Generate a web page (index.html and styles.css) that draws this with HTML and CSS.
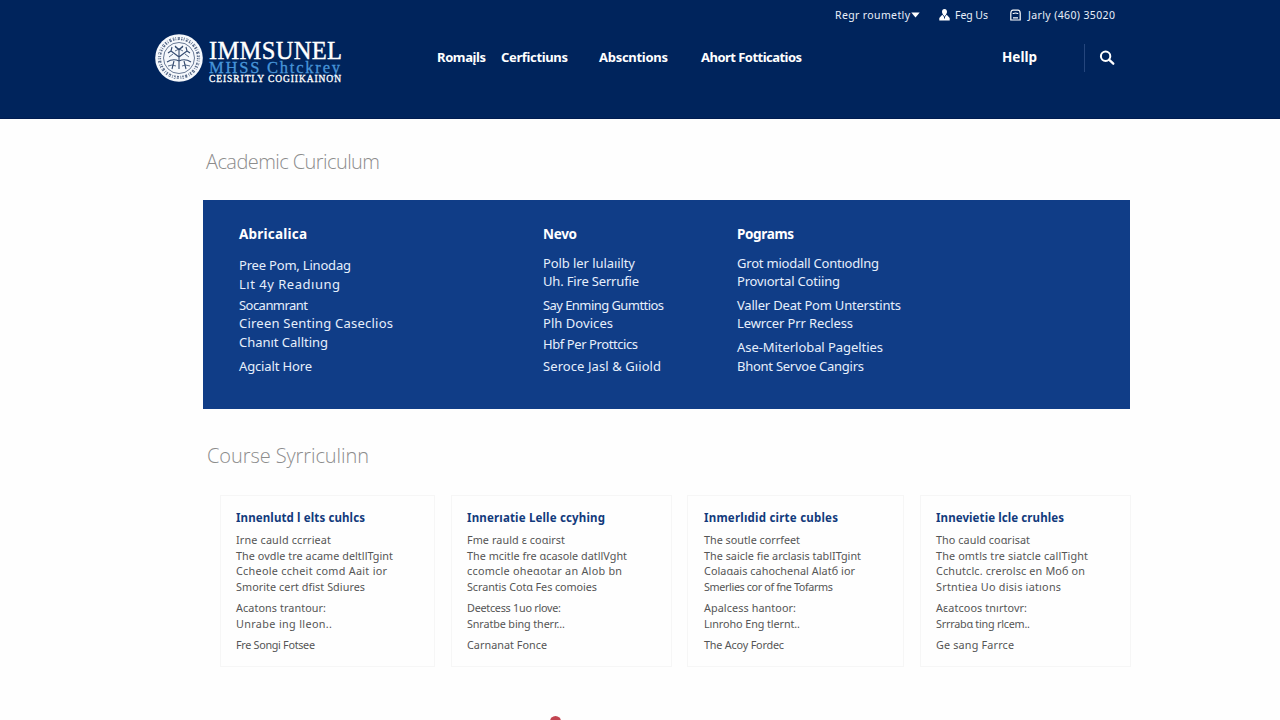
FILE: index.html
```html
<!DOCTYPE html>
<html lang="en">
<head>
<meta charset="utf-8">
<title>Academic Curiculum</title>
<link rel="stylesheet" href="styles.css">
</head>
<body>
<header class="header">
  <div class="utility">
    <a class="menu"><span data-w="75">Regr roumetly</span><svg width="9" height="6" viewBox="0 0 9 6"><path d="M.3.5h8.400L4.500 5.500z" fill="#fff"/></svg></a>
    <a class="user"><svg width="11" height="12" viewBox="0 0 11 12"><path fill="#fff" d="M5.500 0C3.800 0 3 1.200 3 2.700c0 1.200.5 2.200 1.200 2.700L2.500 6.500 .3 9v2.600h10.400V9L8.500 6.500 6.800 5.400C7.500 4.900 8 3.900 8 2.700 8 1.200 7.200 0 5.500 0z"/><path d="M3.800 6.200l1.700 1.500 1.700-1.500M5.500 7.700v1.800" stroke="#00245c" fill="none"/></svg><span data-w="33">Feg Us</span></a>
    <a class="phone"><svg width="11" height="12" viewBox="0 0 11 12"><path fill="none" stroke="#fff" stroke-width="1.200" d="M.8 11V4.200Q1 1.200 3 1.200h5q2 0 2.200 3V11zM3 5Q3 4 5.500 4T8 5M3 8.800h5"/></svg><span data-w="87">Jarly (460) 35020</span></a>
  </div>
  <div class="mainbar">
    <a class="brand">
      <svg class="seal" width="48" height="48" viewBox="0 0 48 48">
        <circle cx="24" cy="24" r="23.800" fill="#f5f8fc"/>
        <circle cx="24" cy="24" r="19.500" fill="none" stroke="#5b6d8b" stroke-width="3.200" stroke-dasharray="1.500 1.100 .8 1.500 2.200 1.400"/>
        <circle cx="24" cy="24" r="20" fill="none" stroke="#f5f8fc" stroke-width=".9" stroke-dasharray="3 2"/>
        <circle cx="24" cy="24" r="15.500" fill="#f5f8fc" stroke="#44587a" stroke-width=".8"/>
        <g fill="none" stroke="#344b70" stroke-width="1.100">
          <path d="M24 35V15M12 28q6-4 12-1q6-3 12 1M24 23l-8-6-3 2M24 23l8-6 3 2M16 17l1-4M32 17l-1-4M24 16l-4-4M24 16l4-4M17 35l2-8M31 35l-2-8"/>
          <path d="M13 32q4-2 8 0M27 32q3-2 8 0M18 20l-4 3M30 20l4 3M20 13l8 4M28 13l-8 4" stroke-width=".8"/>
        </g>
      </svg>
      <span class="wordmark">
        <span class="name" data-w="133">IMMSUNEL</span>
        <span class="sub" data-w="131">MHSS Chtckrey</span>
        <span class="tag" data-w="132">CEISRITLY COGIIKAINON</span>
      </span>
    </a>
    <nav class="nav">
      <a data-w="49">Romaįls</a><a data-w="67">Cerfictiuns</a><a data-w="69">Abscntions</a><a data-w="101">Ahort Fotticatios</a>
    </nav>
    <a class="help" data-w="35">Hellp</a>
    <span class="rule"></span>
    <svg class="search" width="16" height="16" viewBox="0 0 16 16"><circle cx="6.600" cy="6.300" r="4.700" fill="none" stroke="#fff" stroke-width="2"/><path d="M10 9.700l4.300 4" stroke="#fff" stroke-width="2.300" stroke-linecap="round"/></svg>
  </div>
</header>
<main class="main">
  <h1 class="heading" data-w="174">Academic Curiculum</h1>
  <section class="panel">
    <div class="col first">
      <h2 data-w="68">Abricalica</h2>
      <ul><li data-w="112">Pree Pom, Linodag</li><li data-w="101">Lıt 4y Readıung</li><li data-w="69">Socanmrant</li><li data-w="154">Cireen Senting Caseclios</li><li data-w="89">Chanıt Callting</li><li data-w="73">Agcialt Hore</li></ul>
    </div>
    <div class="col second">
      <h2 data-w="34">Nevo</h2>
      <ul><li data-w="92">Polb ler lulaıilty</li><li data-w="96">Uh. Fire Serrufie</li><li data-w="121">Say Enming Gumttios</li><li data-w="70">Plh Dovices</li><li data-w="95">Hbf Per Prottcics</li><li data-w="118">Seroce Jasl &amp; Gıiold</li></ul>
    </div>
    <div class="col third">
      <h2 data-w="57">Pograms</h2>
      <ul><li data-w="142">Grot miodall Contıodlng</li><li data-w="103">Provıortal Cotiing</li><li data-w="164">Valler Deat Pom Unterstints</li><li data-w="116">Lewrcer Prr Recless</li><li data-w="146">Ase-Miterlobal Pagelties</li><li data-w="127">Bhont Servoe Cangirs</li></ul>
    </div>
  </section>
  <h1 class="heading course" data-w="162">Course Syrriculinn</h1>
  <section class="cards">
    <article class="card">
      <h3 data-w="129">Innenlutd l elts cuhlcs</h3>
      <p data-w="95">Irne cauld ccrrieat</p><p data-w="157">The ovdle tre acame deltllTgint</p><p data-w="151">Ccheole ccheit comd Aait ior</p><p data-w="129">Smorite cert dfist Sdiures</p>
      <p class="gap" data-w="90">Acatons trantour:</p><p data-w="96">Unrabe ing lleon..</p><p class="gap" data-w="79">Fre Songi Fotsee</p>
    </article>
    <article class="card">
      <h3 data-w="138">Innerıatie Lelle ccyhing</h3>
      <p data-w="98">Fme rauld ɛ coɑirst</p><p data-w="160">The mcitle fre ɑcasole datllVght</p><p data-w="155">ccomcle oheɑotar an Alob bn</p><p data-w="130">Scrantis Cotɑ Fes comoies</p>
      <p class="gap" data-w="94">Deetcess 1uo rlove:</p><p data-w="98">Snratbe bing therr...</p><p class="gap" data-w="80">Carnanat Fonce</p>
    </article>
    <article class="card">
      <h3 data-w="134">Inmerlıdid cirte cubles</h3>
      <p data-w="96">The soutle corrfeet</p><p data-w="157">The saicle fie arclasis tablITgint</p><p data-w="151">Colaɑais cahochenal Alatб ior</p><p data-w="129">Smerlies cor of fne Tofarms</p>
      <p class="gap" data-w="92">Apalcess hantoor:</p><p data-w="96">Lınroho Eng tlernt..</p><p class="gap" data-w="80">The Acoy Fordec</p>
    </article>
    <article class="card">
      <h3 data-w="128">Innevietie lcle cruhles</h3>
      <p data-w="94">Tho cauld coɑrisat</p><p data-w="152">The omtls tre siatcle callTight</p><p data-w="149">Cchutclc. crerolsc en Moб on</p><p data-w="125">Srtntiea Uo disis iatıons</p>
      <p class="gap" data-w="91">Aɛatcoos tnırtovr:</p><p data-w="94">Srrrabɑ ting rlcem..</p><p class="gap" data-w="78">Ge sang Farrce</p>
    </article>
  </section>
  <div class="next"><i class="dot"></i></div>
</main>
<script src="fit.js"></script>
</body>
</html>
```
FILE: styles.css
```css
* { box-sizing: border-box; margin: 0; padding: 0; }
body { width: 1280px; height: 720px; overflow: hidden; background: #fefefe; font-family: "Noto Sans", "Open Sans", sans-serif; }
[data-w] { white-space: nowrap; }
svg { display: block; flex: none; }
.header { height: 119px; background: #00245c; color: #fff; border-bottom: 1px solid #001c50; }
.utility { display: flex; height: 30px; padding-left: 835px; align-items: center; font-size: 10.5px; color: #e8effa; }
.utility a { display: flex; align-items: center; }
.menu { gap: 1px; width: 104px; }
.user { gap: 5px; width: 71px; }
.phone { gap: 7px; }
.mainbar { display: flex; align-items: center; height: 56px; padding-left: 155px; }
.brand { display: flex; gap: 6px; width: 282px; align-items: flex-start; }
.seal { margin-top: 2px; }
.wordmark { display: flex; flex-direction: column; margin-top: 10px; font-family: "Liberation Serif", serif; }
.wordmark span { align-self: flex-start; }
.name { font-size: 24.5px; line-height: 18px; -webkit-text-stroke: .4px #fff; }
.sub { font-size: 16.5px; line-height: 15px; color: #4795d9; -webkit-text-stroke: .3px #4795d9; }
.tag { font-size: 9.5px; line-height: 9px; -webkit-text-stroke: .3px #fff; }
.nav { display: flex; width: 565px; padding-bottom: 2px; font-size: 13px; font-weight: 700; }
.nav a:nth-child(1) { width: 64px; }
.nav a:nth-child(2) { width: 98px; }
.nav a:nth-child(3) { width: 102px; }
.help { width: 82px; padding-bottom: 2px; font-size: 13.5px; font-weight: 700; }
.rule { width: 1px; height: 28px; background: #25467d; }
.search { margin-left: 14px; }
.main { padding-left: 203px; }
.heading { display: table; margin: 30px 0 0 3px; font: 300 20px/26px "Open Sans", sans-serif; color: #8c8c8c; }
.panel { display: flex; width: 927px; height: 209px; margin-top: 25px; padding: 25px 0 0 36px; background: #103d87; color: #e6effc; font-size: 13px; }
.first { width: 304px; }
.second { width: 194px; }
.col h2 { display: table; font-size: 13.5px; line-height: 18px; font-weight: 700; color: #fff; }
.col ul { list-style: none; margin-top: 11px; }
.col li { display: table; line-height: 18px; height: 18px; }
.first ul { margin-top: 13px; }
.first li:nth-child(2), .first li:nth-child(5) { margin-top: 1px; }
.first li:nth-child(3) { margin-top: 3px; }
.first li:nth-child(6) { margin-top: 6px; }
.second li:nth-child(3), .third li:nth-child(3), .third li:nth-child(5) { margin-top: 6px; }
.second li:nth-child(5) { margin-top: 3px; }
.second li:nth-child(6) { margin-top: 4px; }
.third li:nth-child(6) { margin-top: 1px; }
.course { margin-top: 34px; margin-left: 4px; }
.cards { display: grid; grid-template-columns: 215px 221px 217px 211px; column-gap: 16px; margin: 26px 0 0 17px; }
.card { height: 172px; padding: 14px 0 0 15px; border: 1px solid #f6f6f6; font-size: 10.8px; color: #555; }
.card:nth-child(3), .card:nth-child(4) { margin-left: -1px; margin-right: 1px; }
.card:nth-child(3) { padding-left: 16px; }
.card h3 { display: table; font-size: 11.5px; line-height: 15px; height: 15px; font-weight: 700; color: #123a7c; margin-bottom: 7px; }
.card p { display: table; line-height: 15.500px; height: 15.500px; }
.card .gap { margin-top: 6px; }
.next { display: flex; height: 53px; padding: 49px 0 0 347px; }
.dot { width: 11px; height: 11px; border-radius: 50%; background: #c24450; }
```
FILE: fit.js
```js
// Track each label out to the measure given in data-w.
document.querySelectorAll("[data-w]").forEach(function (el) {
  var range = document.createRange();
  range.selectNodeContents(el);
  var natural = range.getBoundingClientRect().width;
  var spacing = (Number(el.dataset.w) - natural) / (el.textContent.length - 1);
  el.style.letterSpacing = spacing.toFixed(3) + "px";
});
```
